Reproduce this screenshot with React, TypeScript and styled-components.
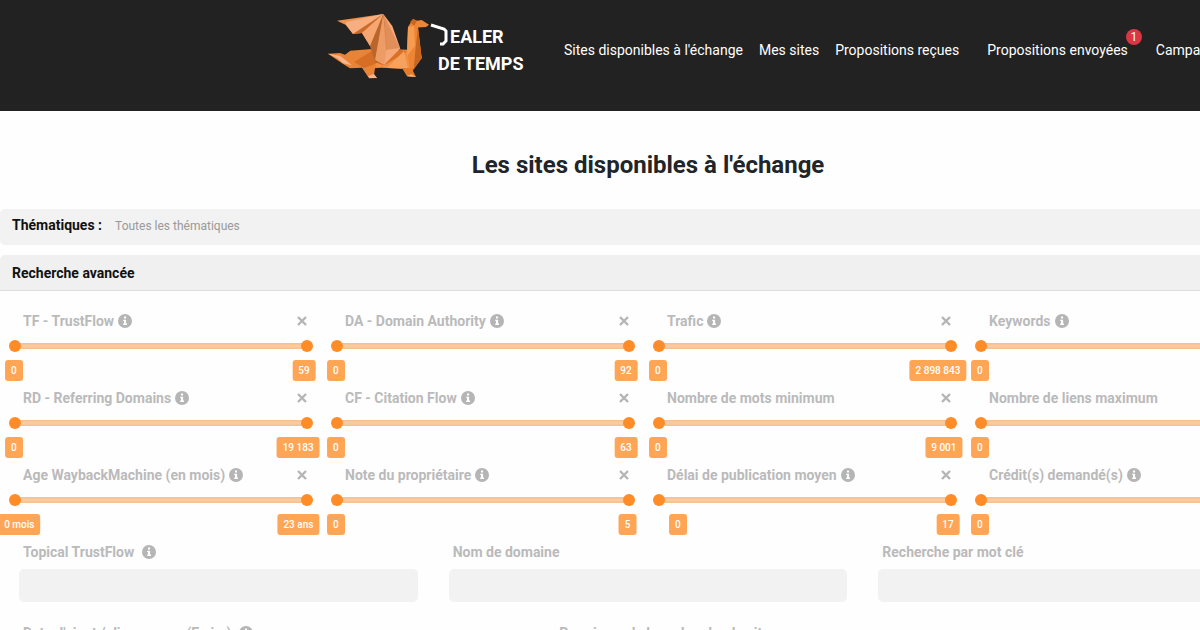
import React from 'react';
import styled, { createGlobalStyle } from 'styled-components';

const GlobalStyle = createGlobalStyle`
  * { box-sizing: border-box; }
  body { margin: 0; background: #fefefe; color: #212529; font: 14px/20px Roboto, sans-serif; overflow: hidden; }
`;

const Page = styled.div`
  width: 100%;
  min-width: 1296px;
`;

const Header = styled.header`
  display: flex;
  align-items: flex-start;
  min-height: 111px;
  padding-left: 328px;
  background: #222;
`;

const Brand = styled.a`
  display: flex;
  flex: none;
  width: 196px;
  margin: 10px 32px 0 0;
`;

const Nav = styled.nav`
  display: flex;
  gap: 16px;
  margin: 0 8px;
  padding-top: 40px;
`;

const NavLink = styled.a<{ $indent?: boolean }>`
  position: relative;
  margin-left: ${(p) => (p.$indent ? 12 : 0)}px;
  color: #fff;
  font-size: 14px;
  white-space: nowrap;
  text-decoration: none;
`;

const Badge = styled.span`
  position: absolute;
  top: -11px;
  right: -14px;
  width: 16px;
  height: 16px;
  border-radius: 8px;
  background: #dc3545;
  font-size: 12px;
  line-height: 16px;
  text-align: center;
`;

const Title = styled.h1`
  margin: 40px 0 29px;
  font-size: 24px;
  line-height: 29px;
  font-weight: 700;
  text-align: center;
`;

const ThemeBar = styled.div`
  display: flex;
  align-items: flex-start;
  gap: 12px;
  height: 36px;
  margin-bottom: 10px;
  padding: 6px 12px;
  border-radius: 5px;
  background: #f2f2f2;
`;

const BarLabel = styled.label`
  color: #111;
  font-weight: 700;
`;

const ThemeInput = styled.input`
  flex: 1;
  height: 22px;
  padding: 1px;
  border: 0;
  background: none;
  font: 12px/20px Roboto, sans-serif;
  &::placeholder { color: #999; opacity: 1; }
`;

const SectionButton = styled.button`
  display: block;
  width: 100%;
  height: 36px;
  padding: 0 12px;
  border: 0;
  border-bottom: 1px solid #ddd;
  border-radius: 5px 5px 0 0;
  background: #f0f0f0;
  color: #111;
  font: 700 14px/20px Roboto, sans-serif;
  text-align: left;
`;

const Filters = styled.div`
  display: grid;
  grid-template-columns: repeat(4, 1fr);
  padding: 20px 4px 0;
`;

const Filter = styled.div`
  height: 77px;
  padding: 0 13px 0 5px;
`;

const FilterHead = styled.div`
  display: flex;
  align-items: center;
  gap: 4px;
  height: 20px;
  padding: 0 5px 0 14px;
`;

const Caption = styled.label`
  color: #bababa;
  font-size: 14px;
  font-weight: 700;
  white-space: nowrap;
`;

const InfoIcon = styled.svg`
  flex: none;
  width: 14px;
  height: 14px;
`;

const Clear = styled.button`
  display: flex;
  margin-left: auto;
  padding: 0;
  border: 0;
  background: none;
`;

const Track = styled.div`
  display: grid;
  align-items: center;
  height: 12px;
  margin: 9px 0 8px;
  background: linear-gradient(#f2bf90, #fbcda0 50%, #f2bf90) center / calc(100% - 10px) 6px no-repeat;
`;

const Range = styled.input`
  grid-area: 1 / 1;
  width: 100%;
  height: 12px;
  margin: 0;
  appearance: none;
  background: none;
  pointer-events: none;
  &::-webkit-slider-thumb {
    appearance: none;
    width: 12px;
    height: 12px;
    border-radius: 50%;
    background: #ff8c26;
    pointer-events: auto;
  }
`;

const Bounds = styled.div`
  display: flex;
  justify-content: space-between;
  padding: 0 2px 0 1px;
`;

const Bubble = styled.output<{ $shift: number; $inset?: boolean }>`
  margin-left: ${(p) => (p.$inset ? 20 : 0)}px;
  padding: 0 6px;
  border-radius: 3px;
  background: #ffa556;
  color: #fff;
  font-size: 10px;
  font-weight: 500;
  line-height: 21px;
  white-space: nowrap;
  transform: translateX(${(p) => p.$shift}%);
`;

const Fields = styled.div<{ $columns: string }>`
  display: grid;
  grid-template-columns: ${(p) => p.$columns};
  gap: 31px;
  padding: 0 19px;
`;

const Field = styled.div`
  height: 81px;
`;

const FieldHead = styled.div`
  display: flex;
  align-items: center;
  gap: 8px;
  height: 20px;
  padding-left: 4px;
`;

const TextInput = styled.input`
  width: 100%;
  height: 33px;
  margin-top: 7px;
  border: 0;
  border-radius: 5px;
  background: #f2f2f2;
`;

const Info = () => (
  <InfoIcon viewBox="0 0 14 14" aria-hidden="true">
    <circle cx="7" cy="7" r="7" fill="#b5b5b5" />
    <path d="M6 2.6h2.1v2H6zM5.2 5.7h2.9v3.8H9V11H5.2V9.5H6V7.1h-.8z" fill="#fff" />
  </InfoIcon>
);

const Logo = () => (
  <svg width="196" height="72" viewBox="328 10 196 72" role="img" aria-label="Dealer de temps">
    <path fill="#e98336" d="M328 53.7L340 53l5 1.7 5.300-4L375 48.700l9 16-4 3-5 .5-1 6.500 3 3.500-9-1.500-6-9-12 .5-8-5z" />
    <path fill="#f9b48c" d="M328 53.700l12 2 12 9.500-9-2-5-4.500zM368 76l6-2 3 4-8 .3z" />
    <path fill="#d66f25" d="M354 62l21-13 3 14-14 5zM375 49l9 16-8 2z" />
    <path fill="#f09045" d="M375 64l25-14.500 7 .2 11-1 4 9-8 10-8 1-25-1-5-1z" />
    <path fill="#d97026" d="M400 49.500l7 2-23 14-9-4z" />
    <path fill="#f7a15f" d="M388 67l16-16 4 18-20-1z" />
    <path fill="#ef934d" d="M337 20.700L383.300 14l-13.300 32-8-13-9 1-7-9z" />
    <path fill="#f7ae80" d="M346 22l37-8-30 20-7-9z" />
    <path fill="#cb6b2b" d="M383.300 14L353 34l9-1z" />
    <path fill="#f5a671" d="M383.300 14L362 33l8 13 7 4z" />
    <path fill="#b9652b" d="M383.300 14L370 46l5 16 9 3z" />
    <path fill="#ee9c65" d="M383.300 14L375 60l9 5 5-8z" />
    <path fill="#f6a777" d="M383.300 14l9 12 8 22.500L384 65l3-17z" />
    <path fill="#c87236" d="M383.300 14L386 50l14-2z" opacity=".45" />
    <path fill="#ee8534" d="M408 27l5-8 4 1.700 4.700-.7 7.300 4.700-3 2.300-8 .5 3.700 30.500-7.700 11-4 0-3-19z" />
    <path fill="#c86620" d="M410 22l3-3 4 1.700-3 5zM418 27l3.700 31-8 11 2-22z" />
    <path fill="#f79b4f" d="M408 27l6-1 1 20-8 10z" />
    <path fill="#e57c2b" d="M402 68l12 0-1 3 3 6-9-.7z" />
    <path fill="#f9b48c" d="M407 76.300l4-2 5 2.700z" />
    <path fill="none" stroke="#fff" strokeWidth="3" d="M431 25l13 4 2 2v10l-3 3h-3" />
    <g fill="#fff" fontFamily="Roboto, sans-serif" fontWeight="700" fontSize="18">
      <text x="450" y="43">EALER</text>
      <text x="438" y="70">DE TEMPS</text>
    </g>
  </svg>
);

type FilterData = { name: string; min: string; max: string; info?: boolean; inset?: boolean };

const filters: FilterData[] = [
  { name: 'TF - TrustFlow', min: '0', max: '59', info: true },
  { name: 'DA - Domain Authority', min: '0', max: '92', info: true },
  { name: 'Trafic', min: '0', max: '2 898 843', info: true },
  { name: 'Keywords', min: '0', max: '99', info: true },
  { name: 'RD - Referring Domains', min: '0', max: '19 183', info: true },
  { name: 'CF - Citation Flow', min: '0', max: '63', info: true },
  { name: 'Nombre de mots minimum', min: '0', max: '9 001' },
  { name: 'Nombre de liens maximum', min: '0', max: '10' },
  { name: 'Age WaybackMachine (en mois)', min: '0 mois', max: '23 ans', info: true },
  { name: 'Note du propriétaire', min: '0', max: '5', info: true },
  { name: 'Délai de publication moyen', min: '0', max: '17', info: true, inset: true },
  { name: 'Crédit(s) demandé(s)', min: '0', max: '10', info: true },
];

const RangeFilter = ({ data, index }: { data: FilterData; index: number }) => (
  <Filter>
    <FilterHead>
      <Caption htmlFor={`min${index}`}>{data.name}</Caption>
      {data.info && <Info />}
      <Clear type="button" aria-label={`Réinitialiser ${data.name}`}>
        <svg width="12" height="12" viewBox="0 0 12 12">
          <path d="M2 2l8 8M10 2l-8 8" stroke="#b5b5b5" strokeWidth="2.4" />
        </svg>
      </Clear>
    </FilterHead>
    <Track>
      <Range id={`min${index}`} type="range" defaultValue={0} />
      <Range aria-label={`${data.name} maximum`} type="range" defaultValue={100} />
    </Track>
    <Bounds>
      <Bubble $shift={-28} $inset={data.inset}>{data.min}</Bubble>
      <Bubble $shift={20}>{data.max}</Bubble>
    </Bounds>
  </Filter>
);

const TextField = ({ id, name, info }: { id: string; name: string; info?: boolean }) => (
  <Field>
    <FieldHead>
      <Caption htmlFor={id}>{name}</Caption>
      {info && <Info />}
    </FieldHead>
    <TextInput id={id} type="text" />
  </Field>
);

export default function App() {
  return (
    <Page>
      <GlobalStyle />
      <Header>
        <Brand href="#"><Logo /></Brand>
        <Nav>
          <NavLink href="#">Sites disponibles à l'échange</NavLink>
          <NavLink href="#">Mes sites</NavLink>
          <NavLink href="#">Propositions reçues</NavLink>
          <NavLink href="#" $indent>Propositions envoyées<Badge>1</Badge></NavLink>
          <NavLink href="#" $indent>Campagnes</NavLink>
        </Nav>
      </Header>
      <main>
        <Title>Les sites disponibles à l'échange</Title>
        <ThemeBar>
          <BarLabel htmlFor="themes">Thématiques :</BarLabel>
          <ThemeInput id="themes" placeholder="Toutes les thématiques" />
        </ThemeBar>
        <SectionButton type="button">Recherche avancée</SectionButton>
        <Filters>
          {filters.map((f, i) => <RangeFilter key={f.name} data={f} index={i} />)}
        </Filters>
        <Fields $columns="repeat(3, 1fr)">
          <TextField id="topical" name="Topical TrustFlow" info />
          <TextField id="domaine" name="Nom de domaine" />
          <TextField id="mot" name="Recherche par mot clé" />
        </Fields>
        <Fields $columns="7fr 10fr">
          <TextField id="date" name="Date d'ajout / dispo. mars (En jrs)" info />
          <TextField id="recherche" name="Premieres de la recherche du site" />
        </Fields>
      </main>
    </Page>
  );
}
